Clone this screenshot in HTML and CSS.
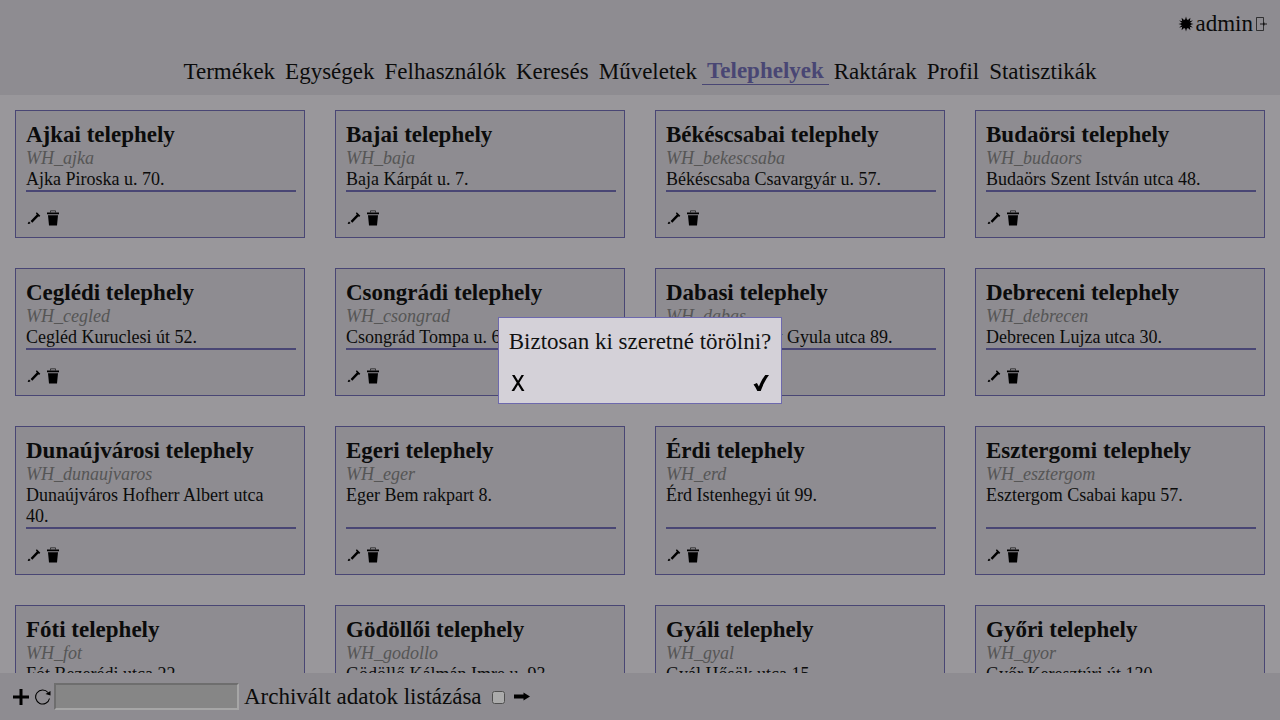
FILE: index.html
```html
<!DOCTYPE html>
<html lang="hu">
<head>
<meta charset="utf-8">
<title>Telephelyek</title>
<link rel="stylesheet" href="styles.css">
</head>
<body>
<svg class="sprite" aria-hidden="true">
  <symbol id="pencil" viewBox="0 0 16 16"><path d="M10.800 2.300 14.300 5.800 13.400 6.700 12.300 6.500 6.300 12.700 4.600 11 10.800 4.600 9.900 3.300z"/><path d="M3 11.500 4.600 13.100 3.600 13.800 1.800 14 2 12.800z"/></symbol>
  <symbol id="trash" viewBox="0 0 16 16"><path d="M5.500 2.500V.8h5v1.700" fill="none" stroke="#000" stroke-opacity=".6"/><path d="M2 2.600h12v1.600H2zM3 5.200h10L12 15.600H4z"/></symbol>
</svg>
<header class="header">
  <div class="user">
    <button class="icon-button" aria-label="Téma váltása"><svg class="icon" viewBox="0 0 16 16"><circle cx="8" cy="8" r="4.600"/><path d="M7 4 8 .5 9 4zM7 12l1 3.500L9 12zM4 7 .5 8 4 9zM12 7l3.500 1L12 9zM4.200 5.800 3.600 1.800 6.300 4.200zM9.700 4.200l2.700-2.400-.6 4zM4.200 10.200l-.6 4 2.700-2.400zM9.700 11.800l2.700 2.400-.6-4zM4 6.800 1 4.600l3.900.6zM12 6.800l3-2.200-3.900.6zM4 9.200 1 11.400l3.900-.6zM12 9.200l3 2.200-3.900-.6z"/></svg></button>
    <span class="user-name">admin</span>
    <button class="icon-button" aria-label="Kijelentkezés"><svg class="icon" viewBox="0 0 16 16"><path d="M3.500 1.500h7v13h-7z" fill="none" stroke="#000" stroke-opacity=".65"/><path d="M7 8h7M11 6.500v3" fill="none" stroke="#000" stroke-opacity=".8"/></svg></button>
  </div>
  <nav class="nav">
    <a class="nav-link" href="#">Termékek</a>
    <a class="nav-link" href="#">Egységek</a>
    <a class="nav-link" href="#">Felhasználók</a>
    <a class="nav-link" href="#">Keresés</a>
    <a class="nav-link" href="#">Műveletek</a>
    <a class="nav-link active" href="#" aria-current="page">Telephelyek</a>
    <a class="nav-link" href="#">Raktárak</a>
    <a class="nav-link" href="#">Profil</a>
    <a class="nav-link" href="#">Statisztikák</a>
  </nav>
</header>
<main class="cards" id="cards"></main>
<footer class="footer">
  <button class="icon-button" aria-label="Új telephely"><svg class="icon" viewBox="0 0 16 16"><path d="M6.500 0h3v6.500H16v3H9.500V16h-3V9.500H0v-3h6.500z"/></svg></button>
  <button class="icon-button refresh" aria-label="Frissítés"><svg class="icon" viewBox="0 0 16 16"><path d="M13 3.500A7 7 0 1 0 14.500 9.500" fill="none" stroke="#000" stroke-width="1.100"/><path d="M15.500 2v4.500L10.500 5z"/></svg></button>
  <input class="search" type="text" aria-label="Keresés">
  <label class="archive-label" for="archive">Archivált adatok listázása</label>
  <input class="archive" id="archive" type="checkbox">
  <button class="icon-button" aria-label="Keresés indítása"><svg class="icon" viewBox="0 0 16 16"><path d="M0 5.500h9.500V3.500L16 7.500l-6.500 4v-2H0z"/></svg></button>
</footer>
<div class="backdrop"></div>
<dialog class="dialog" open aria-labelledby="question">
  <p class="question" id="question">Biztosan ki szeretné törölni?</p>
  <div class="dialog-actions">
    <button class="icon-button" aria-label="Mégse"><svg class="icon-large" viewBox="0 0 20 20"><path d="M3 2h2.600l3.500 5.800L12.500 2H15l-4.700 7.800L15.500 18h-2.700L9 11.800 5.200 18H2.500l5.200-8.200z"/></svg></button>
    <button class="icon-button" aria-label="Törlés"><svg class="icon-large" viewBox="0 0 20 20"><path d="M2.500 11.500 5.900 10l2 3.500C9.500 9.500 11.500 5.500 14.300 2H18C14.200 7 11.700 12.500 9.700 18H6.300C5.200 15.500 4 13.500 2.500 11.500z"/></svg></button>
  </div>
</dialog>
<script src="app.js"></script>
</body>
</html>
```
FILE: styles.css
```css
* {
  box-sizing: border-box;
}

body {
  display: flex;
  flex-direction: column;
  height: 100vh;
  margin: 0;
  background: #e4e1e8;
  color: #111;
  font: 23px/26px "Liberation Serif", serif;
}

.sprite {
  display: none;
}

.header,
.footer {
  flex: none;
  background: #d4d1d8;
}

.header {
  padding: 11px 11px 10px;
}

.user {
  display: flex;
  justify-content: flex-end;
  align-items: center;
}

.user-name {
  margin-left: 2px;
}

.nav {
  display: flex;
  flex-wrap: wrap;
  justify-content: center;
  align-items: center;
  margin-top: 21px;
}

.nav-link {
  padding: 0 5px;
  color: inherit;
  text-decoration: none;
}

.active {
  border-bottom: 1px solid #6d69ad;
  color: #6d69ad;
  font-weight: bold;
}

.icon-button {
  display: flex;
  padding: 0;
  border: 0;
  background: none;
  cursor: pointer;
}

.icon {
  width: 16px;
  height: 16px;
}

.icon-large {
  width: 20px;
  height: 20px;
}

.cards {
  flex: 1;
  min-height: 0;
  display: grid;
  grid-template-columns: repeat(4, minmax(0, 1fr));
  align-content: start;
  gap: 30px;
  padding: 15px;
  overflow-y: auto;
  scrollbar-width: none;
}

.card {
  display: flex;
  flex-direction: column;
  padding: 10px 8px 10px 10px;
  border: 1px solid #6d69ad;
  background: #d4d1d8;
}

.card-body {
  flex: 1;
  border-bottom: 2px solid #6d69ad;
  font-size: 18px;
  line-height: 21px;
}

.card-title {
  margin: 0;
  font-size: 23px;
  line-height: 27px;
}

.card-id {
  margin: 0;
  color: #808080;
  font-style: italic;
}

.card-address {
  margin: 0;
  padding-right: 8px;
}

.card-actions {
  display: flex;
  gap: 3px;
  padding: 18px 0 1px;
}

.footer {
  display: flex;
  align-items: center;
  padding: 10px 13px;
}

.refresh {
  margin: 0 3px 0 6px;
}

.search {
  width: 185px;
  height: 27px;
  padding: 1px 2px;
  border: 2px inset #f8f8f8;
  background: #c8c8c8;
  font: inherit;
}

.archive-label {
  margin-left: 5px;
}

.archive {
  width: 13px;
  height: 13px;
  margin: 2px 9px 0 10px;
}

.backdrop {
  position: fixed;
  inset: 0;
  background: rgba(0, 0, 0, 0.33);
}

.dialog {
  position: fixed;
  inset: 0;
  width: fit-content;
  height: fit-content;
  margin: auto;
  padding: 10px;
  border: 1px solid #6d69ad;
  background: #d4d1d8;
  color: #111;
}

.question {
  margin: 0;
  line-height: 27px;
}

.dialog-actions {
  display: flex;
  justify-content: space-between;
  padding-top: 18px;
}
```
FILE: app.js
```js
const sites = [
  ["Ajkai", "ajka", "Ajka Piroska u. 70."],
  ["Bajai", "baja", "Baja Kárpát u. 7."],
  ["Békéscsabai", "bekescsaba", "Békéscsaba Csavargyár u. 57."],
  ["Budaörsi", "budaors", "Budaörs Szent István utca 48."],
  ["Ceglédi", "cegled", "Cegléd Kuruclesi út 52."],
  ["Csongrádi", "csongrad", "Csongrád Tompa u. 6."],
  ["Dabasi", "dabas", "Dabas Andrássy Gyula utca 89."],
  ["Debreceni", "debrecen", "Debrecen Lujza utca 30."],
  ["Dunaújvárosi", "dunaujvaros", "Dunaújváros Hofherr Albert utca 40."],
  ["Egeri", "eger", "Eger Bem rakpart 8."],
  ["Érdi", "erd", "Érd Istenhegyi út 99."],
  ["Esztergomi", "esztergom", "Esztergom Csabai kapu 57."],
  ["Fóti", "fot", "Fót Bezerédi utca 22."],
  ["Gödöllői", "godollo", "Gödöllő Kálmán Imre u. 93."],
  ["Gyáli", "gyal", "Gyál Hősök utca 15."],
  ["Győri", "gyor", "Győr Keresztúri út 130."]
];

document.getElementById("cards").innerHTML = sites.map(([name, id, address]) => `
  <article class="card">
    <div class="card-body">
      <h2 class="card-title">${name} telephely</h2>
      <p class="card-id">WH_${id}</p>
      <p class="card-address">${address}</p>
    </div>
    <div class="card-actions">
      <button class="icon-button" aria-label="Szerkesztés"><svg class="icon"><use href="#pencil"/></svg></button>
      <button class="icon-button" aria-label="Törlés"><svg class="icon"><use href="#trash"/></svg></button>
    </div>
  </article>`).join("");
```
